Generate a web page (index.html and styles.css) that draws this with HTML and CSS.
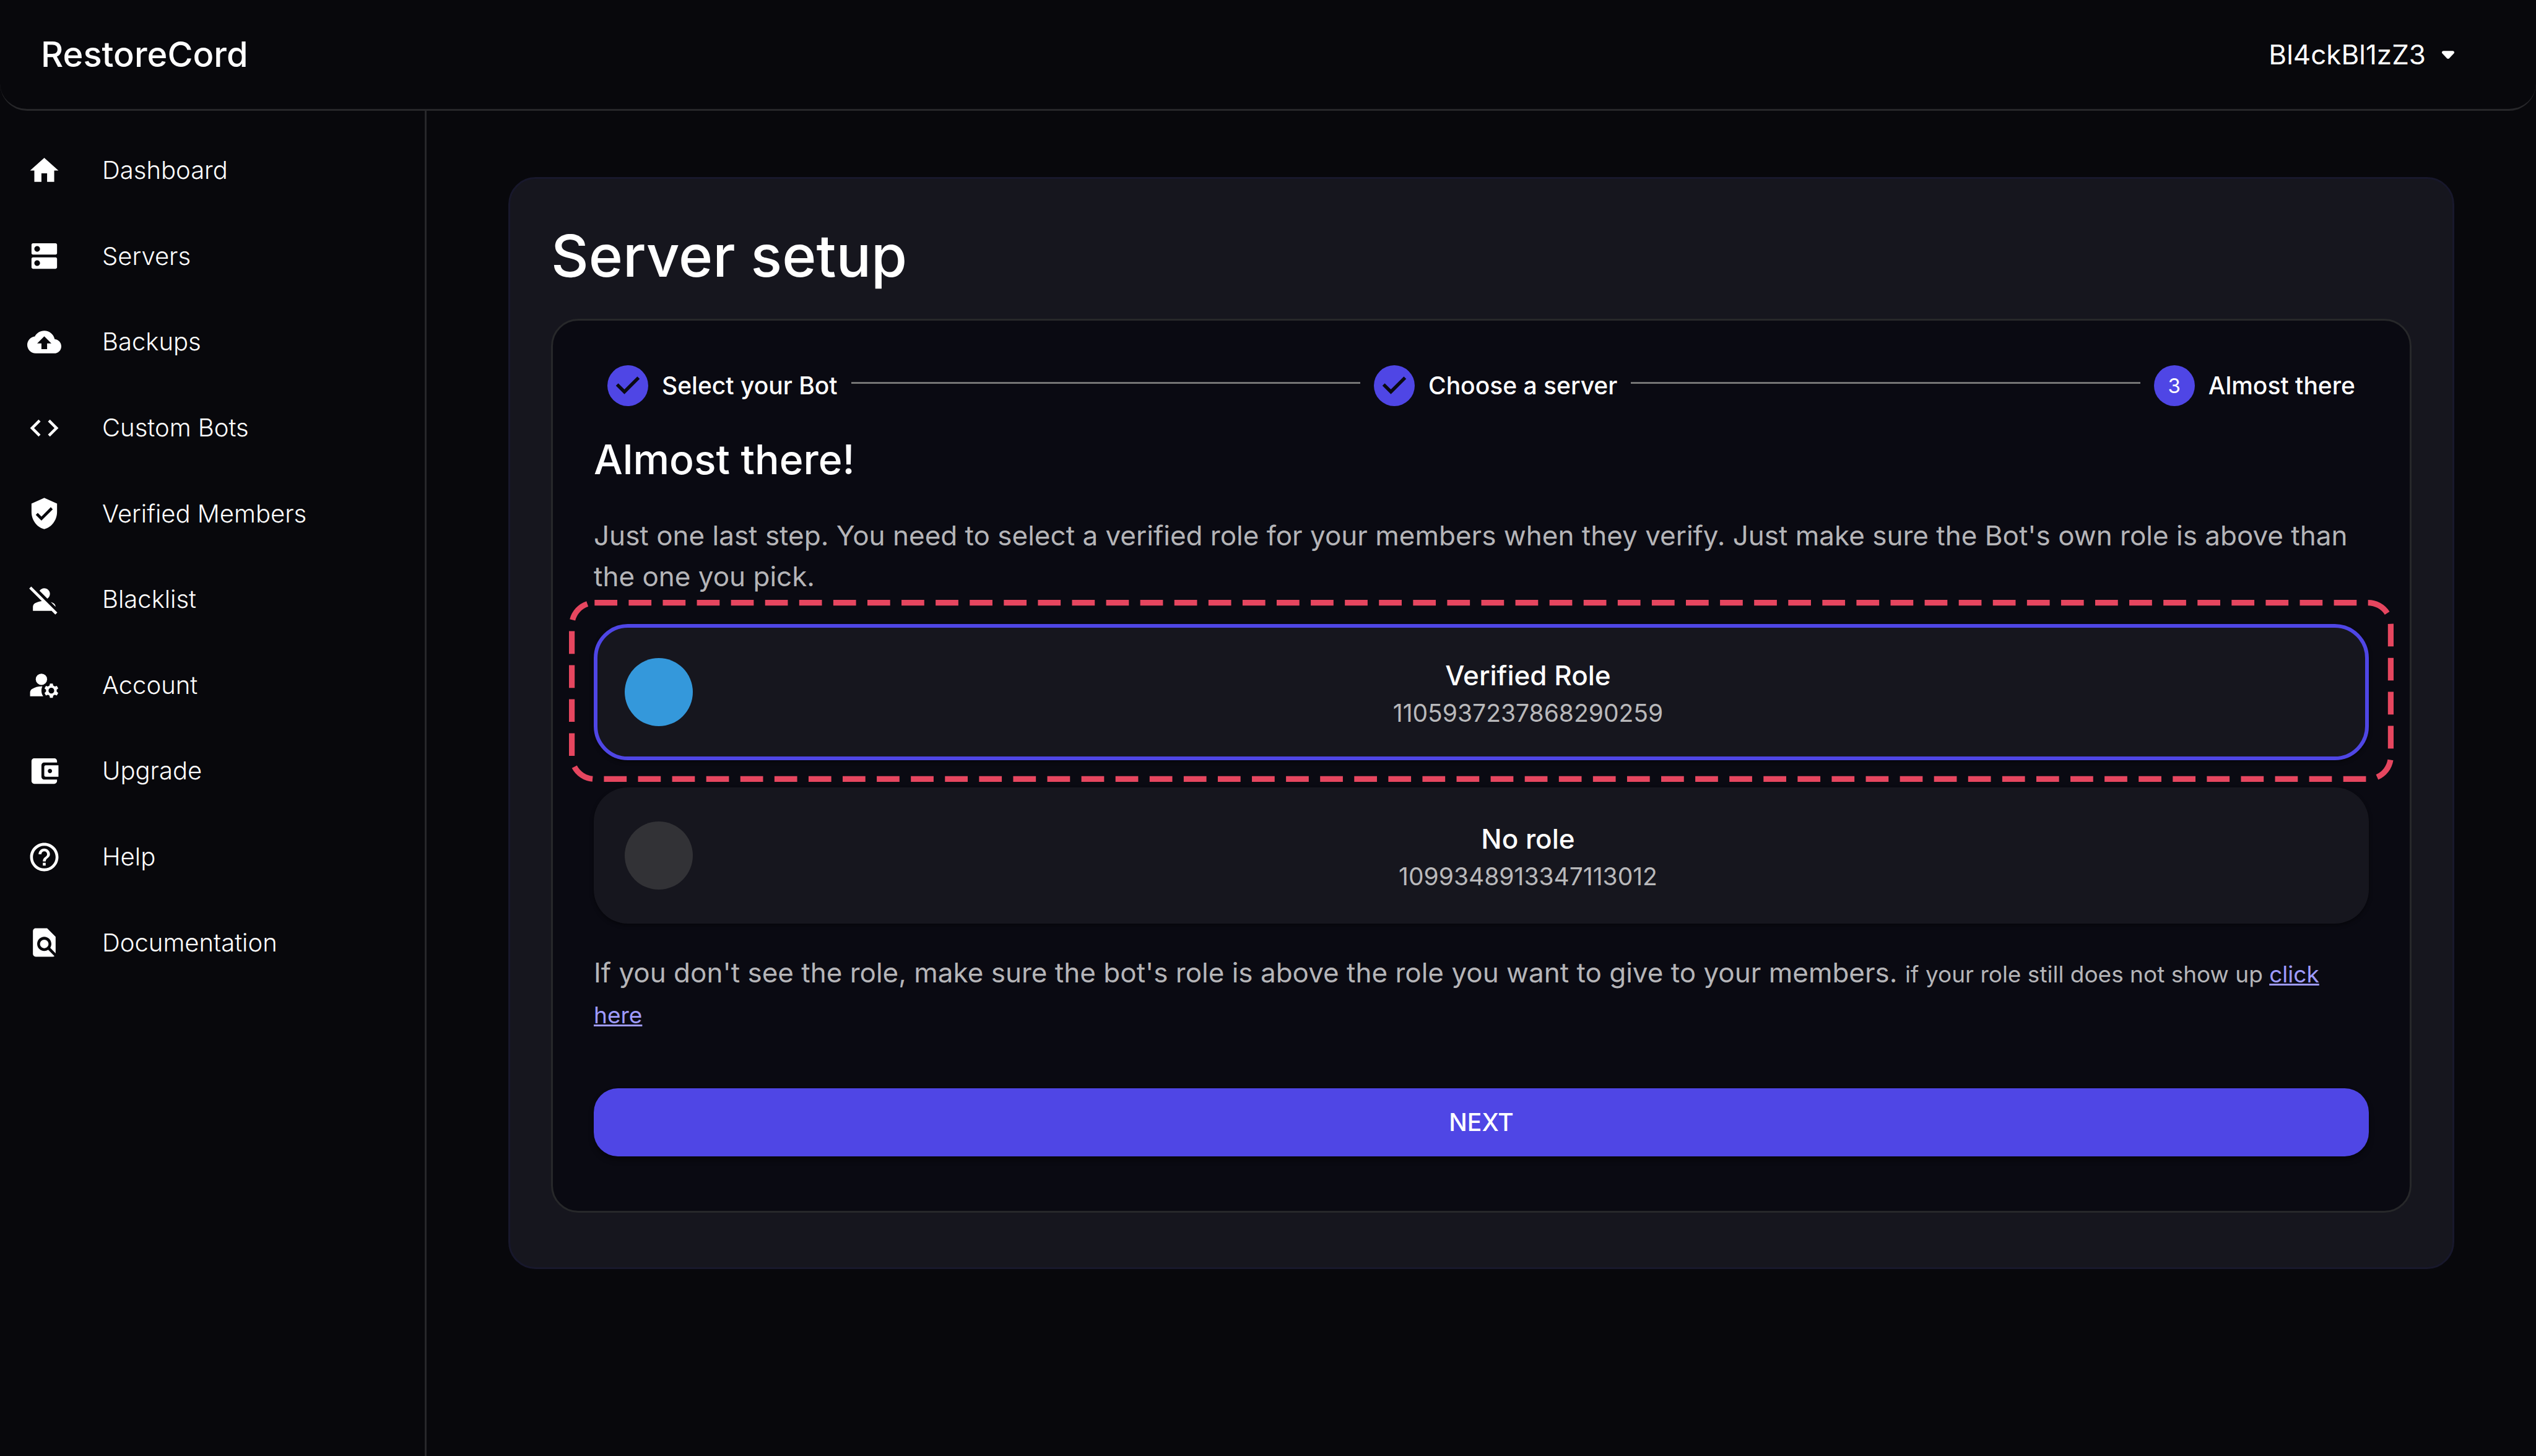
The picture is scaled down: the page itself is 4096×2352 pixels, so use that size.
FILE: index.html
```html
<!DOCTYPE html>
<html lang="en">
<head>
<meta charset="utf-8">
<title>RestoreCord - Server setup</title>
<link rel="stylesheet" href="styles.css">
</head>
<body>
<header class="topbar">
  <a class="brand" href="#">RestoreCord</a>
  <button class="user" type="button">Bl4ckBl1zZ3
    <svg class="caret" viewBox="0 0 22 14"><path d="M3 0h16c2.600 0 4 2.500 2.300 4.500l-8 8.500c-1.300 1.400-3.300 1.400-4.600 0l-8-8.500C-1 2.500.4 0 3 0z"/></svg>
  </button>
</header>
<div class="shell">
  <nav class="sidebar" aria-label="Main">
    <ul class="nav">
      <li><a class="nav-link" href="#"><svg class="icon" viewBox="0 0 24 24"><path d="M10 20v-6h4v6h5v-8h3L12 3 2 12h3v8z"/></svg>Dashboard</a></li>
      <li><a class="nav-link" href="#"><svg class="icon" viewBox="0 0 24 24"><path d="M20 13H4c-.55 0-1 .45-1 1v6c0 .55.45 1 1 1h16c.55 0 1-.45 1-1v-6c0-.55-.45-1-1-1zM7 19c-1.100 0-2-.9-2-2s.9-2 2-2 2 .9 2 2-.9 2-2 2zM20 3H4c-.55 0-1 .45-1 1v6c0 .55.45 1 1 1h16c.55 0 1-.45 1-1V4c0-.55-.45-1-1-1zM7 9c-1.100 0-2-.9-2-2s.9-2 2-2 2 .9 2 2-.9 2-2 2z"/></svg>Servers</a></li>
      <li><a class="nav-link" href="#"><svg class="icon" viewBox="0 0 24 24"><path d="M19.350 10.040C18.670 6.590 15.640 4 12 4 9.110 4 6.600 5.640 5.350 8.040 2.340 8.360 0 10.910 0 14c0 3.310 2.690 6 6 6h13c2.760 0 5-2.240 5-5 0-2.640-2.050-4.780-4.650-4.960zM14 13v4h-4v-4H7l5-5 5 5h-3z"/></svg>Backups</a></li>
      <li><a class="nav-link" href="#"><svg class="icon" viewBox="0 0 24 24"><path d="M9.400 16.600 4.800 12l4.600-4.600L8 6l-6 6 6 6 1.400-1.400zm5.200 0 4.600-4.600-4.600-4.600L16 6l6 6-6 6-1.400-1.400z"/></svg>Custom Bots</a></li>
      <li><a class="nav-link" href="#"><svg class="icon" viewBox="0 0 24 24"><path d="M12 1 3 5v6c0 5.550 3.840 10.740 9 12 5.160-1.260 9-6.450 9-12V5l-9-4zm-2 16-4-4 1.410-1.410L10 14.170l6.590-6.590L18 9l-8 8z"/></svg>Verified Members</a></li>
      <li><a class="nav-link" href="#"><svg class="icon" viewBox="0 0 24 24"><path d="M8.650 5.820C9.360 4.720 10.600 4 12 4c2.210 0 4 1.790 4 4 0 1.400-.72 2.640-1.820 3.350L8.650 5.820zM20 17.170c-.02-1.100-.63-2.110-1.610-2.620-.54-.28-1.130-.54-1.770-.76L20 17.170zm1.190 4.020L2.810 2.810 1.390 4.220l8.890 8.890c-1.810.23-3.390.79-4.670 1.450-1 .51-1.610 1.540-1.610 2.660V20h13.170l2.610 2.610 1.410-1.420z"/></svg>Blacklist</a></li>
      <li><a class="nav-link" href="#"><svg class="icon" viewBox="0 0 24 24"><circle cx="10" cy="8" r="4"/><path d="M10.670 13.020c-.22-.01-.44-.02-.67-.02-2.420 0-4.680.67-6.610 1.820-.88.52-1.390 1.500-1.390 2.530V20h9.260c-.79-1.130-1.260-2.510-1.260-4 0-1.070.25-2.070.67-2.980zM20.750 16c0-.22-.03-.42-.06-.63l1.140-1.010-1-1.730-1.450.49c-.32-.27-.68-.48-1.080-.63L18 11h-2l-.3 1.490c-.4.15-.76.36-1.080.63l-1.450-.49-1 1.730 1.140 1.010c-.03.21-.06.41-.06.63s.03.42.06.63l-1.140 1.010 1 1.730 1.450-.49c.32.27.68.48 1.080.63L16 21h2l.3-1.490c.4-.15.76-.36 1.080-.63l1.450.49 1-1.730-1.140-1.010c.03-.21.06-.41.06-.63zM17 18c-1.100 0-2-.9-2-2s.9-2 2-2 2 .9 2 2-.9 2-2 2z"/></svg>Account</a></li>
      <li><a class="nav-link" href="#"><svg class="icon" viewBox="0 0 24 24"><path d="M10 16V8c0-1.100.89-2 2-2h9V5c0-1.100-.9-2-2-2H5c-1.110 0-2 .9-2 2v14c0 1.100.89 2 2 2h14c1.100 0 2-.9 2-2v-1h-9c-1.110 0-2-.9-2-2zm3-8c-.55 0-1 .45-1 1v6c0 .55.45 1 1 1h9V8h-9zm3 5.500c-.83 0-1.500-.67-1.500-1.500s.67-1.500 1.500-1.500 1.500.67 1.500 1.500-.67 1.500-1.500 1.500z"/></svg>Upgrade</a></li>
      <li><a class="nav-link" href="#"><svg class="icon" viewBox="0 0 24 24"><path d="M11 18h2v-2h-2v2zm1-16C6.480 2 2 6.480 2 12s4.480 10 10 10 10-4.480 10-10S17.520 2 12 2zm0 18c-4.410 0-8-3.590-8-8s3.590-8 8-8 8 3.590 8 8-3.590 8-8 8zm0-14c-2.210 0-4 1.790-4 4h2c0-1.100.9-2 2-2s2 .9 2 2c0 2-3 1.750-3 5h2c0-2.250 3-2.500 3-5 0-2.210-1.790-4-4-4z"/></svg>Help</a></li>
      <li><a class="nav-link" href="#"><svg class="icon" viewBox="0 0 24 24"><path d="M20 19.590V8l-6-6H6c-1.100 0-1.990.9-1.990 2L4 20c0 1.100.89 2 1.990 2H18c.45 0 .85-.15 1.190-.4l-4.430-4.430c-.8.52-1.740.83-2.760.83-2.760 0-5-2.240-5-5s2.240-5 5-5 5 2.240 5 5c0 1.020-.31 1.960-.83 2.750L20 19.590zM9 13c0 1.660 1.340 3 3 3s3-1.340 3-3-1.340-3-3-3-3 1.340-3 3z"/></svg>Documentation</a></li>
    </ul>
  </nav>
  <main class="content">
    <section class="card">
      <h1 class="title">Server setup</h1>
      <div class="panel">
        <ol class="stepper">
          <li class="step"><svg class="badge" viewBox="0 0 24 24"><path d="M12 0a12 12 0 1 0 0 24 12 12 0 0 0 0-24zm-2 17l-5-5 1.400-1.400 3.600 3.600 7.600-7.600L19 8l-9 9z"/></svg>Select your Bot</li>
          <li class="connector" aria-hidden="true"></li>
          <li class="step"><svg class="badge" viewBox="0 0 24 24"><path d="M12 0a12 12 0 1 0 0 24 12 12 0 0 0 0-24zm-2 17l-5-5 1.400-1.400 3.600 3.600 7.600-7.600L19 8l-9 9z"/></svg>Choose a server</li>
          <li class="connector" aria-hidden="true"></li>
          <li class="step" aria-current="step"><span class="badge badge-number">3</span>Almost there</li>
        </ol>
        <h2 class="subtitle">Almost there!</h2>
        <p class="text">Just one last step. You need to select a verified role for your members when they verify. Just make sure the Bot's own role is above than the one you pick.</p>
        <div class="roles">
          <div class="role-wrap">
            <button class="role role-selected" type="button" aria-pressed="true">
              <span class="dot dot-blue"></span>
              <span class="role-body"><span class="role-name">Verified Role</span><span class="role-id">1105937237868290259</span></span>
            </button>
            <svg class="highlight" viewBox="0 0 3210 321" preserveAspectRatio="none" aria-hidden="true"><rect x="5" y="5" width="3200" height="311" rx="40"/></svg>
          </div>
          <button class="role" type="button" aria-pressed="false">
            <span class="dot"></span>
            <span class="role-body"><span class="role-name">No role</span><span class="role-id">1099348913347113012</span></span>
          </button>
        </div>
        <p class="text">If you don't see the role, make sure the bot's role is above the role you want to give to your members. <span class="note">if your role still does not show up <a class="link" href="#">click here</a></span></p>
        <button class="next" type="button">NEXT</button>
      </div>
    </section>
  </main>
</div>
</body>
</html>
```
FILE: styles.css
```css
* { box-sizing: border-box; }

body {
  margin: 0;
  min-height: 100vh;
  display: flex;
  flex-direction: column;
  background: #08080c;
  color: #fff;
  font-family: Inter, "Liberation Sans", sans-serif;
  font-size: 44px;
  line-height: 66px;
}

h1, h2, p, ul, ol { margin: 0; padding: 0; font-weight: inherit; }
ul, ol { list-style: none; }
button { border: 0; padding: 0; background: none; color: inherit; font: inherit; }
a { color: inherit; text-decoration: none; }

.topbar {
  display: flex;
  align-items: center;
  justify-content: space-between;
  height: 179px;
  padding: 0 132px 0 66px;
  border-bottom: 3px solid #27272a;
  border-radius: 0 0 44px 44px;
}
.brand { font-size: 56px; font-weight: 500; }
.user { display: flex; align-items: center; gap: 26px; }
.caret { width: 20px; height: 13px; fill: #fff; }

.shell { flex: 1; display: flex; }
.sidebar { width: 689px; padding-top: 27px; border-right: 3px solid #27272a; }
.nav { display: grid; grid-auto-rows: 1fr; height: 1386px; }
.nav li { display: flex; }
.nav-link { flex: 1; display: flex; align-items: center; gap: 66px; padding-left: 44px; font-size: 40px; font-weight: 300; }
.icon { width: 55px; height: 55px; fill: #fff; }

.content { flex: 1; padding: 107px 132px; }
.card {
  padding: 66px 66px 88px;
  background: #16161e;
  border: 3px solid #18182c;
  border-radius: 44px;
}
.title { font-size: 94px; font-weight: 500; line-height: 116px; }
.panel {
  margin-top: 44px;
  padding: 72px 66px 88px;
  background: #0a0a12;
  border: 3px solid #27282a;
  border-radius: 44px;
}

.stepper { display: flex; align-items: center; gap: 22px; padding: 0 22px; }
.step { display: flex; align-items: center; gap: 22px; font-size: 39px; font-weight: 500; }
.badge { width: 66px; height: 66px; fill: #4f46e5; }
.badge-number { border-radius: 50%; background: #4f46e5; font-size: 33px; font-weight: 400; text-align: center; }
.connector { flex: 1; height: 3px; margin-bottom: 10px; background: #757575; }

.subtitle { margin: 44px 0 48px; font-size: 66px; font-weight: 500; line-height: 84px; }
.text { color: #b5b5b8; }

.roles { display: flex; flex-direction: column; gap: 44px; margin: 44px 0 46px; }
.role-wrap { position: relative; display: flex; }
.role {
  flex: 1;
  display: flex;
  align-items: center;
  gap: 41px;
  min-height: 220px;
  padding: 0 44px;
  background: #16161e;
  border: 6px solid transparent;
  border-radius: 55px;
  box-shadow: 0 3px 6px #0006;
}
.role-selected { border-color: #4f46e5; }
.dot { width: 110px; height: 110px; border-radius: 50%; background: #323236; }
.dot-blue { background: #3498db; }
.role-body { flex: 1; display: flex; flex-direction: column; text-align: center; }
.role-name { font-weight: 500; }
.role-id { font-size: 39px; line-height: 55px; color: #b9b9bb; }
.highlight { position: absolute; left: -40px; top: -39px; width: calc(100% + 80px); height: 294px; pointer-events: none; }
.highlight rect { fill: none; stroke: #e6465f; stroke-width: 10; stroke-dasharray: 40 20; }

.note { font-size: 37px; line-height: 1; }
.link { color: #9f9bff; text-decoration: underline; text-decoration-thickness: 3px; }
.next {
  display: block;
  width: 100%;
  height: 110px;
  margin-top: 88px;
  border-radius: 39px;
  background: #4f46e5;
  font-size: 39px;
  font-weight: 500;
  box-shadow: 0 6px 8px #0006;
}
```
